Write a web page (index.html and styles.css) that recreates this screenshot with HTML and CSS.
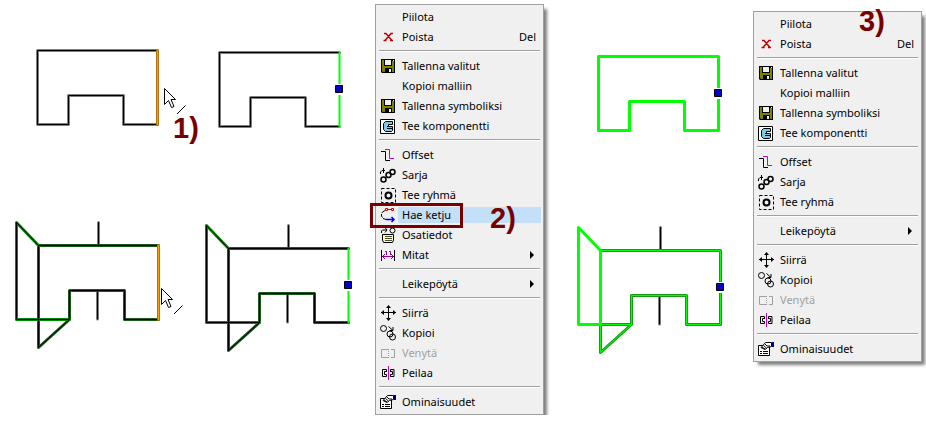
FILE: index.html
```
<!DOCTYPE html>
<html lang="fi">

<head>
    <meta charset="UTF-8">
    <meta name="viewport" content="width=device-width, initial-scale=1.0">
    <title>Hae ketju</title>
    <link rel="stylesheet" href="styles.css">
</head>

<body>
    <svg class="defs" width="0" height="0" aria-hidden="true">
        <!-- drawing shapes -->
        <symbol id="cursor" viewBox="0 0 24 28" overflow="visible">
            <path d="M.5 .5V16.5L4.5 12.5L7.5 19.5L10 18.5L7 11.5H11.5Z" fill="#fff" stroke="#000" />
            <path d="M13 26L21.500 17.500" stroke="#000" />
        </symbol>
        <symbol id="handle" viewBox="0 0 10 10" overflow="visible">
            <path d="M0 0H10V11H0Z" fill="#fff" />
            <path d="M1.500 1.500H8.500V8.500H1.500Z" fill="#0000c8" stroke="#000" />
        </symbol>

        <!-- menu icons -->
        <symbol id="i-delete" viewBox="0 0 16 16">
            <path d="M4 4.500H6L12 11.500M12 4.500H11L5 11.500M3.500 11.500H6.500M10 11.500H13M10.500 4.500H13" fill="none" stroke="#c00000" stroke-width="1.500" />
        </symbol>
        <symbol id="i-save" viewBox="0 0 16 16">
            <path d="M1 1H15V15H2L1 14Z" fill="#000" />
            <path d="M2 2H4V8H12V3H14V14H12V10H5V14H3L2 13Z" fill="#808000" />
            <path d="M5 2H11V7H5ZM9 11H11V14H9Z" fill="#f0f0f0" />
            <path d="M13 2H14V3H13Z" fill="#fff" />
        </symbol>
        <symbol id="i-component" viewBox="0 0 16 16">
            <path d="M.5 1.500H14.500V15.500H.5Z" fill="#fff" stroke="#000" />
            <path d="M5.500 3.500H12.500V6.500H8.500V8.500H12.500V12.500L11.500 13.500H5.500L3.500 11.500V5.500Z" fill="#7cc8e8" stroke="#000" />
            <path d="M7 8.500H10M7 10.500H12" stroke="#000" />
        </symbol>
        <symbol id="i-offset" viewBox="0 0 16 16">
            <path d="M1 4.500H5.500V13.500H10" fill="none" stroke="#000" />
            <path d="M5 2.500H9.500V11.500H14" fill="none" stroke="#c800c8" />
        </symbol>
        <symbol id="i-series" viewBox="0 0 16 16">
            <g fill="none" stroke="#000" stroke-width="1.500">
                <circle cx="3.500" cy="12.500" r="2.500" />
                <circle cx="8.500" cy="8" r="2.500" />
                <circle cx="12.500" cy="5" r="2.500" />
            </g>
            <path d="M.5 7V5L2 3.500H5M3.500 1V6" fill="none" stroke="#000" />
        </symbol>
        <symbol id="i-group" viewBox="0 0 16 16">
            <path d="M1.500 1.500H15.500V15.500H1.500Z" fill="none" stroke="#000" stroke-dasharray="3 2" />
            <circle cx="8.500" cy="8.500" r="3" fill="none" stroke="#000" stroke-width="2" />
        </symbol>
        <symbol id="i-chain" viewBox="0 0 16 16">
            <path d="M5 3.500L2.500 5L1.500 7V9L3 11.500L6 12.500" fill="none" stroke="#000" stroke-dasharray="4 1" />
            <path d="M5.500 1.500H7.500V3.500H5.500ZM11.500 1.500H13.500V3.500H11.500ZM8 2.500H11" fill="#fff" stroke="#e00000" />
            <path d="M6 12.500H14M11.500 10L14 12.500L11.500 15" fill="none" stroke="#0000ff" stroke-width="1.500" />
        </symbol>
        <symbol id="i-parts" viewBox="0 0 16 16">
            <path d="M2.500 7.500H13.500V13L12.500 15.500H3.500L2.500 13Z" fill="#ffffb0" stroke="#000" />
            <path d="M5 9.500H12M5 11.500H12M5 13.500H12" stroke="#000" stroke-opacity=".7" />
            <circle cx="12.500" cy="3.500" r="2.500" fill="none" stroke="#000" />
            <path d="M1.500 6V4L2.500 3H7M5 .5L7 3L5 5.500" fill="none" stroke="#000" />
        </symbol>
        <symbol id="i-dimension" viewBox="0 0 16 16">
            <path d="M1.500 3V14M14.500 3V14" stroke="#000" />
            <path d="M2 9.500H14M5 7L2.500 9.500L5 12M11 7L13.500 9.500L11 12M5 4.500H6.500V8M9 4.500H10.500V8" fill="none" stroke="#900090" />
        </symbol>
        <symbol id="i-move" viewBox="0 0 16 16">
            <path d="M8.500 1V15M1 7.500H16" stroke="#000" />
            <path d="M8.500 0L11 3H6ZM8.500 16L11 13H6ZM1 7.500L4 5V10ZM16 7.500L13 5V10Z" />
        </symbol>
        <symbol id="i-copy" viewBox="0 0 16 16">
            <g fill="none" stroke="#000">
                <circle cx="3.500" cy="3.500" r="3" />
                <circle cx="10" cy="9" r="3" />
                <circle cx="12.500" cy="12" r="3" />
                <path d="M8.500 1.500L13 5.500M13 2V5.500H9.500" />
            </g>
        </symbol>
        <symbol id="i-stretch" viewBox="0 0 16 16">
            <path d="M9 4.500H1.500V12.500H9M11 4.500H14.500V12.500H11" fill="none" stroke="#a0a0a0" />
            <path d="M8.500 6V12" stroke="#a0a0a0" stroke-dasharray="1 1" />
        </symbol>
        <symbol id="i-mirror" viewBox="0 0 16 16">
            <path d="M6.500 6V4.500H2.500V11.500H6.500V9.500H4.500V6.500H7M10.500 6V4.500H14V11.500H10.500V9.500H12.500V6.500H10" fill="none" stroke="#000" />
            <path d="M8.500 1V15" stroke="#c800c8" />
        </symbol>
        <symbol id="i-properties" viewBox="0 0 16 16">
            <path d="M.5 4.500H11.500V14.500H.5Z" fill="#fff" stroke="#000" />
            <path d="M2 10.500H4M5 10.500H10M2 12.500H4M5 12.500H10" stroke="#000" />
            <path d="M3 6.500L7.500 1.500H13.500V5.500L9.500 6.500L7 8.500Z" fill="#fff" stroke="#000" />
            <path d="M4 6L7 8M5.500 4.500L8.500 7M7 3L9 5H12" fill="none" stroke="#000" />
            <path d="M14 1H16V6H14Z" fill="#000080" />
        </symbol>
    </svg>

    <main class="steps">
        <section class="step">
            <svg class="drawing" width="200" height="360">
                <g class="line gray">
                    <path d="M157.500 50.500H37.500V124.500H68.500V95.500H123.500V124.500H157.500" />
                    <path d="M98.500 222.500V244M97.500 292V319" />
                </g>
                <path class="line dark" d="M158.500 245.500H38.500V347.500L69.500 319.500V290.500H124.500V319.500H158.500" />
                <path class="line flap" d="M38.500 245.500L16.500 222.500V319.500H69.500" />
                <g class="core">
                    <path d="M157.500 50.500H37.500V124.500H68.500V95.500H123.500V124.500H157.500" />
                    <path d="M98.500 222.500V244M97.500 292V319" />
                    <path d="M158.500 245.500H38.500L16.500 222.500V319.500H69.500V290.500H124.500V319.500H158.500M38.500 245.500V347.500L69.500 319.500" />
                </g>
                <path class="line brown" d="M157.500 50.500V124.500M158.500 245.500V319.500" />
                <path class="core orange" d="M157.500 50.500V124.500M158.500 245.500V319.500" />
                <use href="#cursor" x="164" y="88" width="24" height="28" />
                <use href="#cursor" x="161" y="288" width="24" height="28" />
            </svg>
            <span class="number first">1)</span>
        </section>

        <section class="step">
            <svg class="drawing" width="175" height="360">
                <g class="line gray">
                    <path d="M139.500 52.500H19.500V126.500H50.500V97.500H105.500V126.500H139.500" />
                    <path d="M88.500 225.500V247M87.500 295V322" />
                </g>
                <path class="line dark" d="M148.500 248.500H28.500V350.500L59.500 322.500V293.500H114.500V322.500H148.500" />
                <path class="line flap" d="M28.500 248.500L6.500 225.500V322.500H59.500" />
                <g class="core">
                    <path d="M139.500 52.500H19.500V126.500H50.500V97.500H105.500V126.500H139.500" />
                    <path d="M88.500 225.500V247M87.500 295V322" />
                    <path d="M148.500 248.500H28.500L6.500 225.500V322.500H59.500V293.500H114.500V322.500H148.500M28.500 248.500V350.500L59.500 322.500" />
                </g>
                <path class="line lime thin" d="M139.500 52.500V126.500M148.500 248.500V322.500" />
                <use href="#handle" x="134" y="84" width="10" height="10" />
                <use href="#handle" x="143" y="280" width="10" height="10" />
            </svg>
            <ul class="menu">
                <li><button><span class="label">Piilota</span></button></li>
                <li><button><svg><use href="#i-delete" /></svg><span class="label">Poista<kbd>Del</kbd></span></button></li>
                <li class="separator"></li>
                <li><button><svg><use href="#i-save" /></svg><span class="label">Tallenna valitut</span></button></li>
                <li><button><span class="label">Kopioi malliin</span></button></li>
                <li><button><svg><use href="#i-save" /></svg><span class="label">Tallenna symboliksi</span></button></li>
                <li><button><svg><use href="#i-component" /></svg><span class="label">Tee komponentti</span></button></li>
                <li class="separator"></li>
                <li><button><svg><use href="#i-offset" /></svg><span class="label">Offset</span></button></li>
                <li><button><svg><use href="#i-series" /></svg><span class="label">Sarja</span></button></li>
                <li><button><svg><use href="#i-group" /></svg><span class="label">Tee ryhmä</span></button></li>
                <li class="marked"><button class="selected"><svg><use href="#i-chain" /></svg><span class="label">Hae ketju</span></button></li>
                <li><button><svg><use href="#i-parts" /></svg><span class="label">Osatiedot</span></button></li>
                <li><button class="submenu"><svg><use href="#i-dimension" /></svg><span class="label">Mitat</span></button></li>
                <li class="separator"></li>
                <li><button class="submenu"><span class="label">Leikepöytä</span></button></li>
                <li class="separator"></li>
                <li><button><svg><use href="#i-move" /></svg><span class="label">Siirrä</span></button></li>
                <li><button><svg><use href="#i-copy" /></svg><span class="label">Kopioi</span></button></li>
                <li><button disabled><svg><use href="#i-stretch" /></svg><span class="label">Venytä</span></button></li>
                <li><button><svg><use href="#i-mirror" /></svg><span class="label">Peilaa</span></button></li>
                <li class="separator"></li>
                <li><button><svg><use href="#i-properties" /></svg><span class="label">Ominaisuudet</span></button></li>
            </ul>
            <span class="number second">2)</span>
        </section>

        <section class="step">
            <svg class="drawing" width="209" height="360">
                <path class="line gray" d="M116.500 227.500V249M115.500 297V324" />
                <path class="core" d="M116.500 227.500V249M115.500 297V324" />
                <path class="line lime" d="M174.500 56.500H54.500V130.500H85.500V101.500H140.500V130.500H174.500Z" />
                <path class="line green" d="M56.500 250.500H176.500V324.500H142.500V295.500H87.500V324.500H56.500M56.500 324.500V352.500L87.500 324.500" />
                <path class="core bright" d="M56.500 250.500H176.500V324.500H142.500V295.500H87.500V324.500H56.500M56.500 324.500V352.500L87.500 324.500" />
                <path class="line lime" d="M56.500 324.500H34.500V227.500L56.500 250.500V324.500" />
                <use href="#handle" x="169" y="88" width="10" height="10" />
                <use href="#handle" x="171" y="282" width="10" height="10" />
            </svg>
            <ul class="menu lower">
                <li><button><span class="label">Piilota</span></button></li>
                <li><button><svg><use href="#i-delete" /></svg><span class="label">Poista<kbd>Del</kbd></span></button></li>
                <li class="separator"></li>
                <li><button><svg><use href="#i-save" /></svg><span class="label">Tallenna valitut</span></button></li>
                <li><button><span class="label">Kopioi malliin</span></button></li>
                <li><button><svg><use href="#i-save" /></svg><span class="label">Tallenna symboliksi</span></button></li>
                <li><button><svg><use href="#i-component" /></svg><span class="label">Tee komponentti</span></button></li>
                <li class="separator"></li>
                <li><button><svg><use href="#i-offset" /></svg><span class="label">Offset</span></button></li>
                <li><button><svg><use href="#i-series" /></svg><span class="label">Sarja</span></button></li>
                <li><button><svg><use href="#i-group" /></svg><span class="label">Tee ryhmä</span></button></li>
                <li class="separator"></li>
                <li><button class="submenu"><span class="label">Leikepöytä</span></button></li>
                <li class="separator"></li>
                <li><button><svg><use href="#i-move" /></svg><span class="label">Siirrä</span></button></li>
                <li><button><svg><use href="#i-copy" /></svg><span class="label">Kopioi</span></button></li>
                <li><button disabled><svg><use href="#i-stretch" /></svg><span class="label">Venytä</span></button></li>
                <li><button><svg><use href="#i-mirror" /></svg><span class="label">Peilaa</span></button></li>
                <li class="separator"></li>
                <li><button><svg><use href="#i-properties" /></svg><span class="label">Ominaisuudet</span></button></li>
            </ul>
            <span class="number third">3)</span>
        </section>
    </main>
</body>

</html>
```
FILE: styles.css
```
* {
    margin: 0;
    padding: 0;
    box-sizing: border-box;
}

body {
    background: #fff;
    color: #000;
    font-family: 'Segoe UI', 'Noto Sans', sans-serif;
    font-size: 11px;
}

.defs {
    display: block;
}

.steps,
.step {
    display: flex;
    align-items: flex-start;
}

.step {
    position: relative;
}

/* drawings */
.drawing {
    display: block;
    flex: none;
}

.line,
.core {
    fill: none;
    stroke-linejoin: round;
    stroke-linecap: round;
}

.line {
    stroke-width: 3px;
}

.core {
    stroke: #000;
    stroke-width: 1px;
}

.gray {
    stroke: #808080;
}

.dark {
    stroke: #1c5a1c;
}

.flap {
    stroke: #008c00;
}

.brown {
    stroke: #b87010;
}

.orange {
    stroke: #ff9900;
}

.green {
    stroke: #10a010;
}

.bright {
    stroke: #00ff00;
}

.lime {
    stroke: #00ff00;
}

.thin {
    stroke-width: 2px;
}

/* context menus */
.menu {
    width: 169px;
    flex: none;
    margin-top: 4px;
    padding: 2px 0;
    list-style: none;
    background: #f0f0f0;
    border: 1px solid #a0a0a0;
    box-shadow: 4px 4px 3px -1px rgba(0, 0, 0, 0.5);
}

.menu.lower {
    margin-top: 11px;
}

.menu li {
    position: relative;
}

.menu .separator {
    height: 2px;
    margin: 3px 3px 4px;
    background: #fff;
    border-top: 1px solid #a0a0a0;
}

.menu button {
    display: flex;
    align-items: center;
    width: 100%;
    height: 20px;
    padding: 0 2px 0 22px;
    border: none;
    background: none;
    color: inherit;
    font: inherit;
    text-align: left;
}

.menu button svg {
    width: 16px;
    height: 16px;
    margin-left: -18px;
    margin-right: 2px;
}

.menu button:disabled {
    color: #a0a0a0;
}

.label {
    display: flex;
    flex: 1;
    align-items: center;
    justify-content: space-between;
    padding: 0 5px 0 4px;
    line-height: 16px;
}

.label kbd {
    font: inherit;
}

.selected .label {
    background: #c4e0f8;
}

.submenu .label::after {
    content: '';
    margin-right: 2px;
    border: 4px solid transparent;
    border-left-color: #000;
    border-right: none;
}

/* red callouts */
.marked::after {
    content: '';
    position: absolute;
    left: -6px;
    top: -2px;
    width: 87px;
    height: 19px;
    border: 3px solid #780000;
}

.number {
    position: absolute;
    color: #780000;
    font: bold 29px/32px 'Liberation Sans', Arial, sans-serif;
}

.first {
    left: 173px;
    top: 112px;
}

.second {
    left: 290px;
    top: 202px;
}

.third {
    left: 315px;
    top: 5px;
}
```
